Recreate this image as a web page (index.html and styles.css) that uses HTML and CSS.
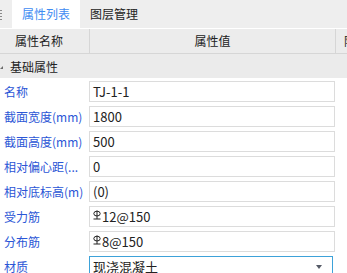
FILE: index.html
```html
<!DOCTYPE html>
<html lang="zh-CN">
<head>
    <meta charset="UTF-8">
    <meta name="viewport" content="width=device-width, initial-scale=1.0">
    <title>属性列表</title>
    <link rel="stylesheet" href="styles.css">
</head>
<body>
    <div class="panel">
        <div class="tabs">
            <span class="grip"></span>
            <div class="tab active">属性列表</div>
            <div class="tab">图层管理</div>
        </div>

        <div class="grid-head">
            <div class="hcell col-name">属性名称</div>
            <div class="hcell col-value">属性值</div>
            <div class="hcell col-extra">附加</div>
        </div>

        <div class="group"><span class="caret"></span>基础属性</div>

        <div class="row">
            <div class="label">名称</div>
            <div class="field">TJ-1-1</div>
        </div>
        <div class="row">
            <div class="label">截面宽度(mm)</div>
            <div class="field">1800</div>
        </div>
        <div class="row">
            <div class="label">截面高度(mm)</div>
            <div class="field">500</div>
        </div>
        <div class="row">
            <div class="label">相对偏心距(...</div>
            <div class="field">0</div>
        </div>
        <div class="row">
            <div class="label">相对底标高(m)</div>
            <div class="field">(0)</div>
        </div>
        <div class="row">
            <div class="label">受力筋</div>
            <div class="field">
                <svg class="rebar" width="8" height="10" viewBox="0 0 8 10"><ellipse cx="4" cy="3.6" rx="3.2" ry="2.4" fill="none" stroke="#222" stroke-width="1"/><path d="M4 0.5V9M0.5 9H7.5" stroke="#222" stroke-width="1" fill="none"/></svg>12@150
            </div>
        </div>
        <div class="row">
            <div class="label">分布筋</div>
            <div class="field">
                <svg class="rebar" width="8" height="10" viewBox="0 0 8 10"><ellipse cx="4" cy="3.6" rx="3.2" ry="2.4" fill="none" stroke="#222" stroke-width="1"/><path d="M4 0.5V9M0.5 9H7.5" stroke="#222" stroke-width="1" fill="none"/></svg>8@150
            </div>
        </div>
        <div class="row">
            <div class="label">材质</div>
            <div class="field select">现浇混凝土<span class="arrow"></span></div>
        </div>
    </div>
</body>
</html>
```

FILE: styles.css
```css
body {
    margin: 0;
    width: 347px;
    height: 273px;
    overflow: hidden;
    background-color: #ffffff;
    font-family: "Noto Sans CJK SC", "Noto Sans", sans-serif;
    color: #222;
}

.panel {
    display: flex;
    flex-direction: column;
    width: 347px;
}

.tabs {
    display: flex;
    height: 28px;
    background-color: #eeeeee;
    font-size: 12px;
}

.grip {
    width: 12px;
    background-image: radial-gradient(circle, #8a8a8a 0.8px, transparent 1px);
    background-size: 2px 3px;
    background-repeat: repeat-y;
    height: 11px;
    margin-top: 9px;
}

.tab {
    padding: 0 10px;
    line-height: 28px;
    color: #222;
}

.tab.active {
    background-color: #ffffff;
    color: #3f8cf2;
}

.grid-head {
    display: flex;
    height: 24px;
    border-top: 1px solid #ffffff;
    border-bottom: 1px solid #d6d6d6;
    background-color: #ececec;
    font-size: 12px;
    color: #222;
    white-space: nowrap;
}

.hcell {
    flex-shrink: 0;
    line-height: 24px;
    overflow: hidden;
}

.col-name {
    width: 74px;
    padding-left: 15px;
    border-right: 1px solid #d6d6d6;
}

.col-value {
    width: 245px;
    text-align: center;
    border-right: 1px solid #d6d6d6;
}

.col-extra {
    padding-left: 8px;
}

.group {
    display: flex;
    align-items: center;
    height: 24px;
    background-color: #ebebeb;
    font-size: 12px;
    color: #222;
}

.caret {
    width: 0;
    height: 0;
    margin-right: 7px;
    border-left: 3px solid transparent;
    border-bottom: 3px solid #6d6d6d;
    margin-top: 2px;
}

.row {
    display: grid;
    grid-template-columns: 89px 246px;
    height: 25px;
    padding-top: 3px;
    box-sizing: border-box;
    align-items: start;
}

.label {
    padding-left: 4px;
    line-height: 21px;
    font-size: 12px;
    color: #2b56d6;
    white-space: nowrap;
    overflow: hidden;
}

.field {
    display: flex;
    align-items: center;
    height: 21px;
    padding: 0 3px;
    border: 1px solid #dcdcdc;
    box-sizing: border-box;
    font-size: 13px;
    color: #222;
    white-space: nowrap;
}

.rebar {
    margin-right: 1px;
    margin-top: -3px;
}

.field.select {
    position: relative;
    border-color: #3da2d9;
    width: 244px;
}

.arrow {
    position: absolute;
    right: 10px;
    top: 8px;
    width: 0;
    height: 0;
    border-left: 3px solid transparent;
    border-right: 3px solid transparent;
    border-top: 4px solid #555a66;
}
```
